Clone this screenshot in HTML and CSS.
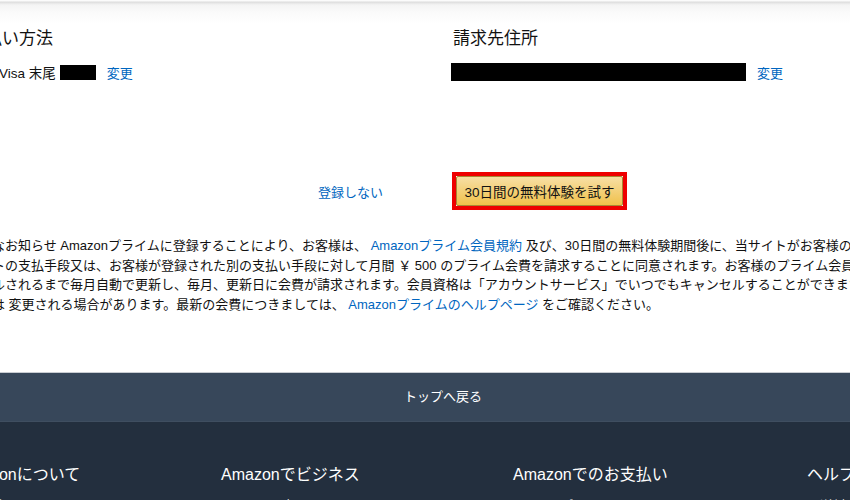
FILE: index.html
```html
<!DOCTYPE html>
<html lang="ja">
<head>
<meta charset="utf-8">
<title>Amazonプライム</title>
<link rel="stylesheet" href="styles.css">
</head>
<body>
<div class="shadow"></div>
<section class="addresses">
  <div class="col">
    <h2 class="col-title">支払い方法</h2>
    <div class="col-row pay-row">
      <span>Visa 末尾</span><span class="mask mask-card"></span><a class="link change" href="#">変更</a>
    </div>
  </div>
  <div class="col">
    <h2 class="col-title">請求先住所</h2>
    <div class="col-row">
      <span class="mask mask-addr"></span><a class="link change" href="#">変更</a>
    </div>
  </div>
</section>
<section class="actions">
  <a class="link skip" href="#">登録しない</a>
  <div class="highlight"><button class="btn-trial" type="button">30日間の無料体験を試す</button></div>
</section>
<p class="legal">重要なお知らせ Amazonプライムに登録することにより、お客様は、 <a class="link" href="#">Amazonプライム会員規約</a> 及び、30日間の無料体験期間後に、当サイトがお客様のAmazonアカウン<br>ウントの支払手段又は、お客様が登録された別の支払い手段に対して月間 ￥ 500 のプライム会費を請求することに同意されます。お客様のプライム会員資格は<br>ンセルされるまで毎月自動で更新し、毎月、更新日に会費が請求されます。会員資格は「アカウントサービス」でいつでもキャンセルすることができます。<br>会費は 変更される場合があります。最新の会費につきましては、 <a class="link" href="#">Amazonプライムのヘルプページ</a> をご確認ください。</p>
<footer class="footer">
  <div class="back-top">トップへ戻る</div>
  <div class="footer-main">
    <div class="fcol fcol-1"><h3>Amazonについて</h3><a href="#">採用情報</a></div>
    <div class="fcol fcol-2"><h3>Amazonでビジネス</h3><a href="#">Amazonで売る</a></div>
    <div class="fcol fcol-3"><h3>Amazonでのお支払い</h3><a href="#">Amazonポイント</a></div>
    <div class="fcol fcol-4"><h3>ヘルプ</h3><a href="#">配送料と配送情報</a></div>
  </div>
</footer>
</body>
</html>
```

FILE: styles.css
```css
html, body {
  margin: 0;
  padding: 0;
}
body {
  width: 850px;
  height: 500px;
  overflow: hidden;
  background: #fff;
  color: #111;
  font-family: "Liberation Sans", "Noto Sans CJK JP", sans-serif;
}
.shadow {
  height: 24px;
  background: linear-gradient(to bottom, #fbfbfb 0, #fbfbfb 1px, #dcdcdc 2px, #e5e5e5 3px, #f4f4f4 5px, #fafafa 12px, #fff 24px);
}
.addresses {
  display: grid;
  grid-template-columns: 485px 1fr;
  margin-left: -32px;
}
.col-title {
  margin: 3px 0 0;
  font-size: 17px;
  font-weight: normal;
  line-height: 24px;
  color: #111;
}
.col-row {
  display: flex;
  align-items: center;
  margin-top: 12px;
  height: 18px;
  font-size: 13.5px;
}
.pay-row {
  padding-left: 31px;
}
.mask {
  display: inline-block;
  background: #000;
}
.mask-card {
  width: 36px;
  height: 15px;
  margin-left: 4px;
}
.mask-addr {
  width: 295px;
  height: 18px;
  margin-left: -2px;
}
.link {
  color: #0066c0;
  text-decoration: none;
}
.change {
  margin-left: 11px;
  font-size: 13px;
}
.actions {
  display: flex;
  align-items: center;
  margin-top: 91px;
  padding-left: 318px;
}
.skip {
  font-size: 13px;
  margin-right: 69px;
}
.highlight {
  border: 4px solid #ee0000;
}
.btn-trial {
  display: block;
  height: 30px;
  width: 167px;
  margin: 0;
  padding: 0;
  border: 1px solid #a88734;
  border-radius: 2px;
  background: linear-gradient(to bottom, #f7dfa5, #f0c14b);
  color: #111;
  font-family: "Liberation Sans", "Noto Sans CJK JP", sans-serif;
  font-size: 13.5px;
}
.legal {
  margin: 26px 0 0 -34px;
  font-size: 13px;
  line-height: 19.5px;
  white-space: nowrap;
  color: #111;
}
.footer {
  margin-top: 58px;
  border-top: 1px solid #c9cdd2;
}
.back-top {
  height: 48px;
  line-height: 48px;
  padding-left: 36px;
  text-align: center;
  background: #37475a;
  color: #fff;
  font-size: 13px;
  border-bottom: 1px solid #3f4e60;
}
.footer-main {
  display: flex;
  background: #232f3e;
  padding-top: 42px;
  margin-left: -42px;
  height: 200px;
  white-space: nowrap;
}
.fcol h3 {
  margin: 0;
  font-size: 16px;
  font-weight: normal;
  line-height: 22px;
  color: #fff;
}
.fcol a {
  display: block;
  margin-top: 9px;
  font-size: 13px;
  color: #ddd;
  text-decoration: none;
}
.fcol-1 { width: 263px; flex: none; }
.fcol-2 { width: 292px; flex: none; }
.fcol-3 { width: 294px; flex: none; }
.fcol-4 { flex: none; }
```
